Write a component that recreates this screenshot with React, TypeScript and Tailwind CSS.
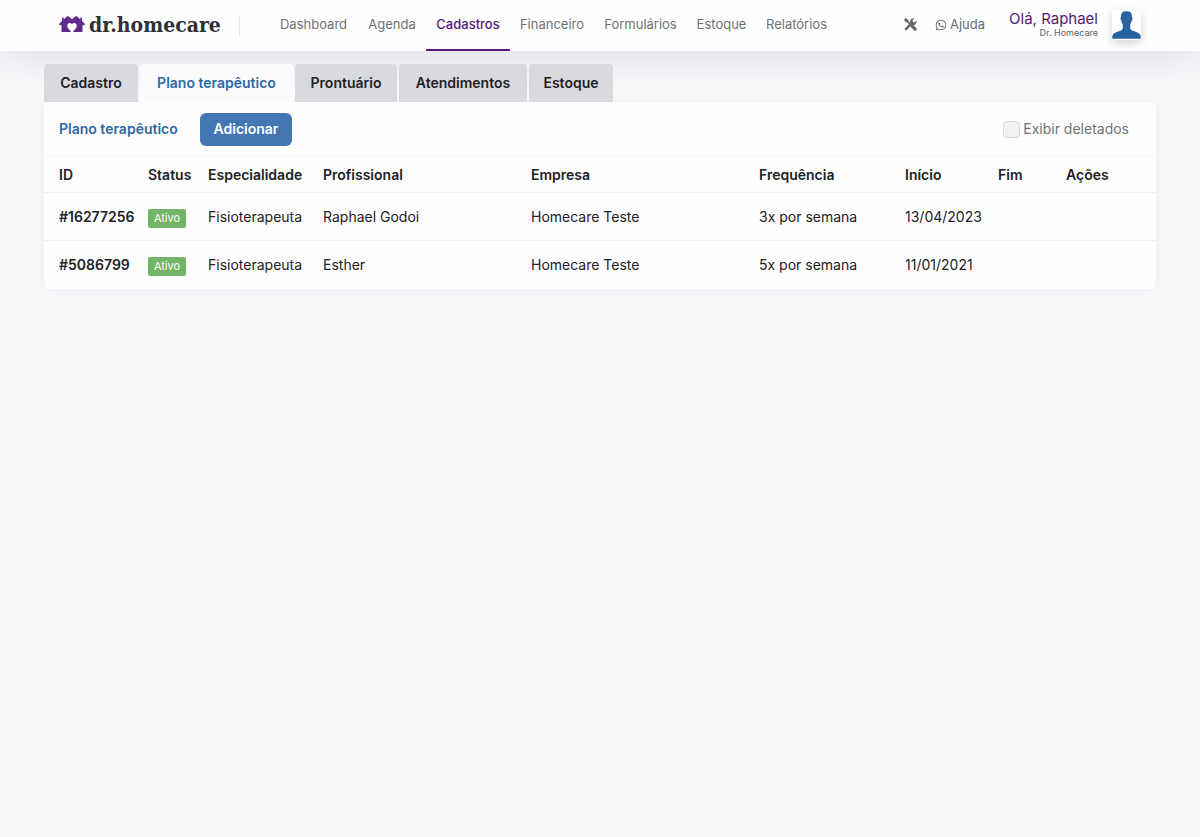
import { FaWhatsapp } from "react-icons/fa";

const navItems = [
  { label: "Dashboard", width: "w-[89px]" },
  { label: "Agenda", width: "w-[68px]" },
  { label: "Cadastros", width: "w-[84px]", active: true },
  { label: "Financeiro", width: "w-[84px]" },
  { label: "Formulários", width: "w-[93px]" },
  { label: "Estoque", width: "w-[69px]" },
  { label: "Relatórios", width: "w-[81px]" },
];

const tabs = [
  { label: "Cadastro", width: "w-[94px]" },
  { label: "Plano terapêutico", width: "w-[153px]", active: true },
  { label: "Prontuário", width: "w-[102px]" },
  { label: "Atendimentos", width: "w-[128px]" },
  { label: "Estoque", width: "w-[84px]" },
];

const columns = [
  { label: "ID", width: "w-[96px]" },
  { label: "Status", width: "w-[60px]" },
  { label: "Especialidade", width: "w-[115px]" },
  { label: "Profissional", width: "w-[208px]" },
  { label: "Empresa", width: "w-[228px]" },
  { label: "Frequência", width: "w-[146px]" },
  { label: "Início", width: "w-[93px]" },
  { label: "Fim", width: "w-[68px]" },
  { label: "Ações", width: "w-[98px]" },
];

const plans = [
  { id: "#16277256", professional: "Raphael Godoi", frequency: "3x por semana", start: "13/04/2023" },
  { id: "#5086799", professional: "Esther", frequency: "5x por semana", start: "11/01/2021" },
];

function HouseLogo() {
  return (
    <svg viewBox="0 0 26 17" className="h-[17px] w-[26px]" aria-hidden="true">
      <path
        fill="#632a8c"
        d="M0 8 3 5.100V1.800h1.800v1.500L8 .3h1.500L13 3.300 16.500.3H18l3.200 3V1.800H23v3.300L26 8l-.8 1.200h-1.700V16H2.500V9.200H.8Z"
      />
      <path
        fill="#fefefe"
        d="M11.600 16.200V15C9.800 13.300 8.300 11.600 8.300 9.700c0-2.900 3.400-3.500 4.700-1.200 1.300-2.300 4.700-1.700 4.700 1.200 0 1.900-1.500 3.600-3.300 5.300v1.200Z"
      />
    </svg>
  );
}

function ToolsIcon() {
  return (
    <svg viewBox="0 0 24 24" className="h-[13px] w-[13px]" fill="none" stroke="#666" aria-hidden="true">
      <path strokeWidth="4.500" strokeLinecap="round" d="m3.500 20.500 12-12" />
      <path fill="#666" stroke="none" d="M23.500 6.500a6.500 6.500 0 0 1-9 6L11.500 9.500a6.500 6.500 0 0 1 6-9L19 1l-3.500 3.500.5 3.500 3.500.5L23 5Z" />
      <path strokeWidth="3" d="m4 4 9 9" />
      <path fill="#666" stroke="none" d="m0 3 3-3 5 3.500v3L6.500 8h-3Z" />
      <path strokeWidth="6" strokeLinecap="round" d="m15.500 15.500 5 5" />
    </svg>
  );
}

function Avatar() {
  return (
    <svg viewBox="0 0 29 28" className="h-7 w-[29px]" aria-hidden="true">
      <path
        fill="#27639d"
        d="M14.500.2c4 0 5.700 1.900 5.500 5.900.7.500.7 3-.3 3.500-.3 1.900-.9 3.100-1.500 4.100v3.500c.3 1.700 2.200 2.500 4.900 3.300 3.500 1.100 5.400 2.400 5.800 5.400.1.900-.4 1.500-1.400 1.900H1.500c-1-.4-1.500-1-1.400-1.900.4-3 2.300-4.300 5.800-5.400 2.700-.8 4.600-1.600 4.900-3.300v-3.500c-.6-1-1.200-2.200-1.500-4.100-1-.5-1-3-.3-3.500-.2-4 1.500-5.900 5.500-5.900Z"
      />
    </svg>
  );
}

export default function App() {
  return (
    <div className="min-h-screen bg-[#f7f8fa] font-['Inter',sans-serif] text-[#212125]">
      <header className="flex h-[51px] items-center bg-[#fefefe] pr-[59px] pl-[59px] shadow-[0_4px_40px_rgba(50,35,70,0.13)]">
        <a href="#" className="flex h-[49px] items-center gap-1 self-start" aria-label="dr.homecare">
          <HouseLogo />
          <span className="w-[136px] font-['DejaVu_Serif_Condensed','DejaVu_Serif',serif] text-[21px] leading-8 font-bold whitespace-nowrap text-[#303035]">
            dr.homecare
          </span>
        </a>
        <nav className="ml-[14px] flex h-5 items-center border-l border-[#e4e4ea] pl-[29px]">
          {navItems.map((item) => (
            <a
              key={item.label}
              href="#"
              className={`flex h-[51px] items-center justify-center border-b-2 text-[13px] whitespace-nowrap ${item.width} ${
                item.active ? "border-[#541a7c] font-medium text-[#541a7c]" : "border-transparent text-[#707074]"
              }`}
            >
              {item.label}
            </a>
          ))}
        </nav>
        <div className="ml-auto flex h-[49px] items-center self-start text-[#69696d]">
          <button type="button" aria-label="Ferramentas" className="mr-[18px]">
            <ToolsIcon />
          </button>
          <a href="#" className="mr-6 flex items-center gap-[3px] text-[13px]">
            <FaWhatsapp size={12} />
            Ajuda
          </a>
          <div className="mr-[14px] text-right">
            <div className="text-[15px] leading-4 text-[#541a7c]">Olá, Raphael</div>
            <div className="text-[9px] leading-[11px] text-[#606064]">Dr. Homecare</div>
          </div>
          <button type="button" aria-label="Perfil" className="rounded bg-white py-px shadow-[0_3px_8px_rgba(0,0,0,0.18)]">
            <Avatar />
          </button>
        </div>
      </header>

      <main className="px-11 pt-[13px]">
        <nav className="flex gap-[2px]">
          {tabs.map((tab) => (
            <a
              key={tab.label}
              href="#"
              className={`flex h-[38px] items-center justify-center rounded-t text-sm font-semibold whitespace-nowrap ${tab.width} ${
                tab.active ? "bg-[#fbfbfd] text-[#2d68a4]" : "bg-[#d9dae0] text-[#212125]"
              }`}
            >
              {tab.label}
            </a>
          ))}
        </nav>

        <section className="overflow-hidden rounded-md bg-[#fefefe] shadow-[0_2px_12px_rgba(40,50,80,0.04)]">
          <div className="flex h-[54px] items-center pr-[27px] pl-[15px]">
            <h1 className="w-[141px] text-sm font-semibold whitespace-nowrap text-[#2d68a4]">Plano terapêutico</h1>
            <button type="button" className="h-[33px] w-[92px] rounded-md bg-[#4377b3] text-sm font-semibold text-white">
              Adicionar
            </button>
            <label className="ml-auto flex items-center gap-[3px] text-sm text-[#717178]">
              <input
                type="checkbox"
                className="h-[17px] w-[17px] appearance-none rounded border border-[#d9d9df] bg-[#f2f2f6] checked:bg-[#4377b3]"
              />
              Exibir deletados
            </label>
          </div>
          <table className="w-full table-fixed border-collapse text-left text-sm">
            <thead>
              <tr className="h-9 border-t border-b border-t-[#f8f8fa] border-b-[#f0f1f4]">
                {columns.map((column) => (
                  <th key={column.label} className={`px-2 font-semibold first:pl-[15px] ${column.width}`}>
                    {column.label}
                  </th>
                ))}
              </tr>
            </thead>
            <tbody>
              {plans.map((plan) => (
                <tr key={plan.id} className="h-12 border-b border-[#f0f1f4] whitespace-nowrap last:border-0">
                  <th scope="row" className="pl-[15px] font-semibold">{plan.id}</th>
                  <td className="px-2">
                    <span className="mt-1 flex h-[19px] w-[38px] items-center justify-center rounded-xs bg-[#73b566] text-[11px] text-white">
                      Ativo
                    </span>
                  </td>
                  <td className="px-2">Fisioterapeuta</td>
                  <td className="px-2">{plan.professional}</td>
                  <td className="px-2">Homecare Teste</td>
                  <td className="px-2">{plan.frequency}</td>
                  <td className="px-2">{plan.start}</td>
                  <td />
                  <td />
                </tr>
              ))}
            </tbody>
          </table>
        </section>
      </main>
    </div>
  );
}
